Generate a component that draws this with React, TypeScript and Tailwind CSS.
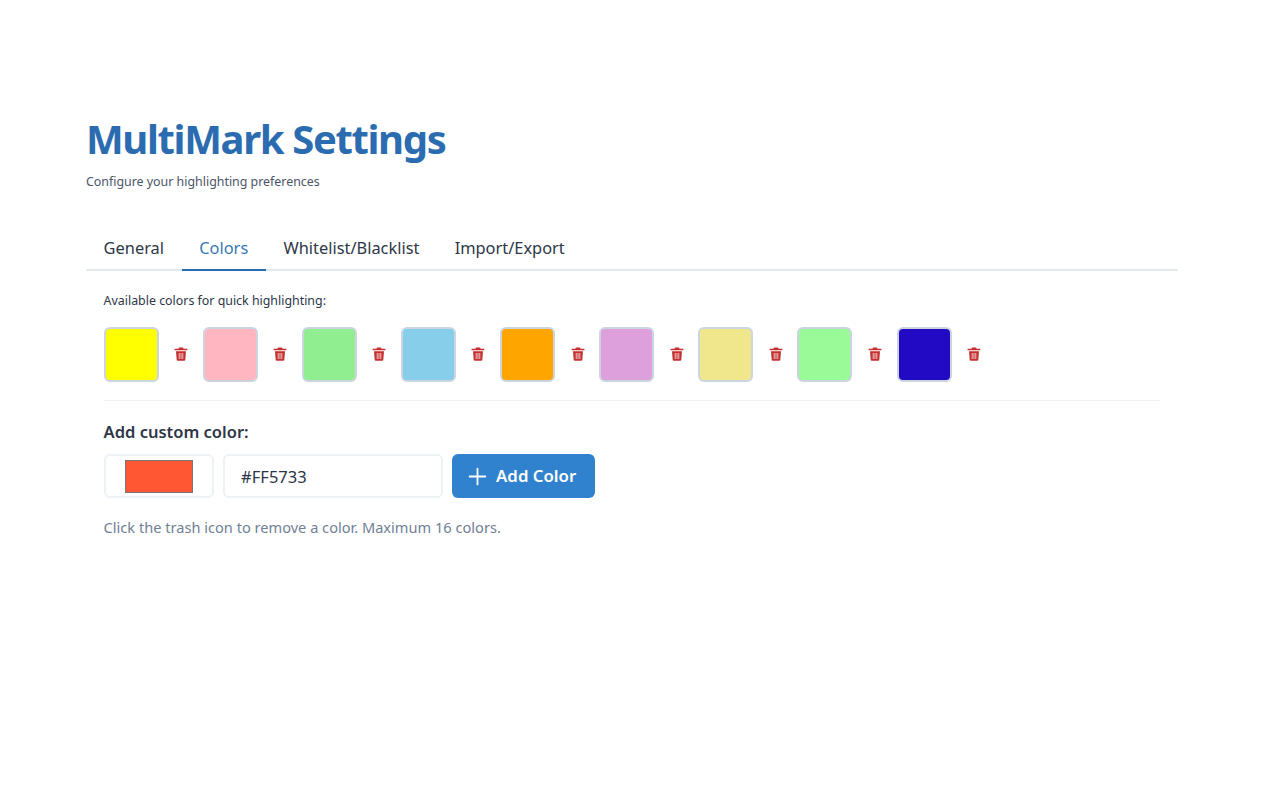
import { Plus } from 'lucide-react';

const colors = [
  { name: 'yellow', swatch: 'bg-[#ffff00]' },
  { name: 'pink', swatch: 'bg-[#ffb6c1]' },
  { name: 'light green', swatch: 'bg-[#90ee90]' },
  { name: 'sky blue', swatch: 'bg-[#87ceeb]' },
  { name: 'orange', swatch: 'bg-[#ffa500]' },
  { name: 'plum', swatch: 'bg-[#dda0dd]' },
  { name: 'khaki', swatch: 'bg-[#f0e68c]' },
  { name: 'mint', swatch: 'bg-[#98fb98]' },
  { name: 'indigo', swatch: 'bg-[#2209c4]' },
];

const tabs = ['General', 'Colors', 'Whitelist/Blacklist', 'Import/Export'];

function TrashIcon() {
  return (
    <svg viewBox="0 0 14 14" className="block h-[14px] w-[14px] fill-current" aria-hidden>
      <path d="M5 0.4h4l0.6 1.4H13.4v1.5H0.6V1.8H4.4z" />
      <path fillRule="evenodd" d="M2 4.2h10l-0.7 8.6a1.1 1.1 0 0 1-1.1 1H3.8a1.1 1.1 0 0 1-1.1-1zM4.8 6v6h0.7V6zM6.65 6v6h0.7V6zM8.5 6v6h0.7V6z" />
    </svg>
  );
}

export default function App() {
  return (
    <div className="min-h-[800px] bg-white font-['Noto_Sans',sans-serif] text-[#2d3748]">
      <div className="ml-[86px] w-[1092px] pt-[111px]">
        <h1 className="text-[40px] leading-[56px] font-bold tracking-[-1.35px] text-[#2b6cb0]">MultiMark Settings</h1>
        <p className="mt-[5px] text-[12.4px] leading-[20px] text-[#4a5568]">Configure your highlighting preferences</p>

        <div className="mt-[34px] flex border-b-2 border-[#e2e8f0]">
          {tabs.map((tab) => (
            <button
              key={tab}
              className={
                tab === 'Colors'
                  ? 'mb-[-2px] h-[45px] border-b-2 border-[#2b6cb0] px-[17.6px] pt-[2px] text-[16.4px] text-[#3b78b8]'
                  : 'mb-[-2px] h-[45px] border-b-2 border-transparent px-[17.6px] pt-[2px] text-[16.4px] text-[#2d3748]'
              }
            >
              {tab}
            </button>
          ))}
        </div>

        <div className="px-[17.6px]">
          <p className="mt-[21px] text-[12.4px] leading-[18px]">Available colors for quick highlighting:</p>

          <div className="mt-[17px] flex border-b border-[#edf2f7] pb-[18px]">
            {colors.map((color) => (
              <div key={color.name} className="flex w-[99.125px] items-center">
                <div className={`h-[55px] w-[55px] rounded-[6px] border-2 border-[#cbd5e0] ${color.swatch}`} />
                <button aria-label={`Remove ${color.name}`} className="-mt-px ml-[15.5px] text-[#c53030]">
                  <TrashIcon />
                </button>
              </div>
            ))}
          </div>

          <h2 className="mt-[20px] text-[16.5px] leading-[22px] font-semibold">Add custom color:</h2>

          <div className="mt-[11px] flex gap-[9px]">
            <div className="flex h-[44px] w-[110px] items-center justify-center rounded-[6px] border-2 border-[#edf2f7]">
              <div className="h-[33px] w-[68px] border border-[#767676] bg-[#ff5733]" />
            </div>
            <input
              readOnly
              value="#FF5733"
              className="h-[44px] w-[220px] rounded-[6px] border-2 border-[#edf2f7] px-[16.5px] text-[16.5px] text-[#2d3748] outline-none"
            />
            <button className="flex h-[44px] w-[143px] items-center gap-[5px] rounded-[6px] bg-[#3182ce] pl-[12.5px] text-[16.8px] font-semibold text-white">
              <Plus className="size-[27px]" strokeWidth={1.6} aria-hidden />
              Add Color
            </button>
          </div>

          <p className="mt-[18px] text-[14.6px] leading-[22px] text-[#718096]">
            Click the trash icon to remove a color. Maximum 16 colors.
          </p>
        </div>
      </div>
    </div>
  );
}
